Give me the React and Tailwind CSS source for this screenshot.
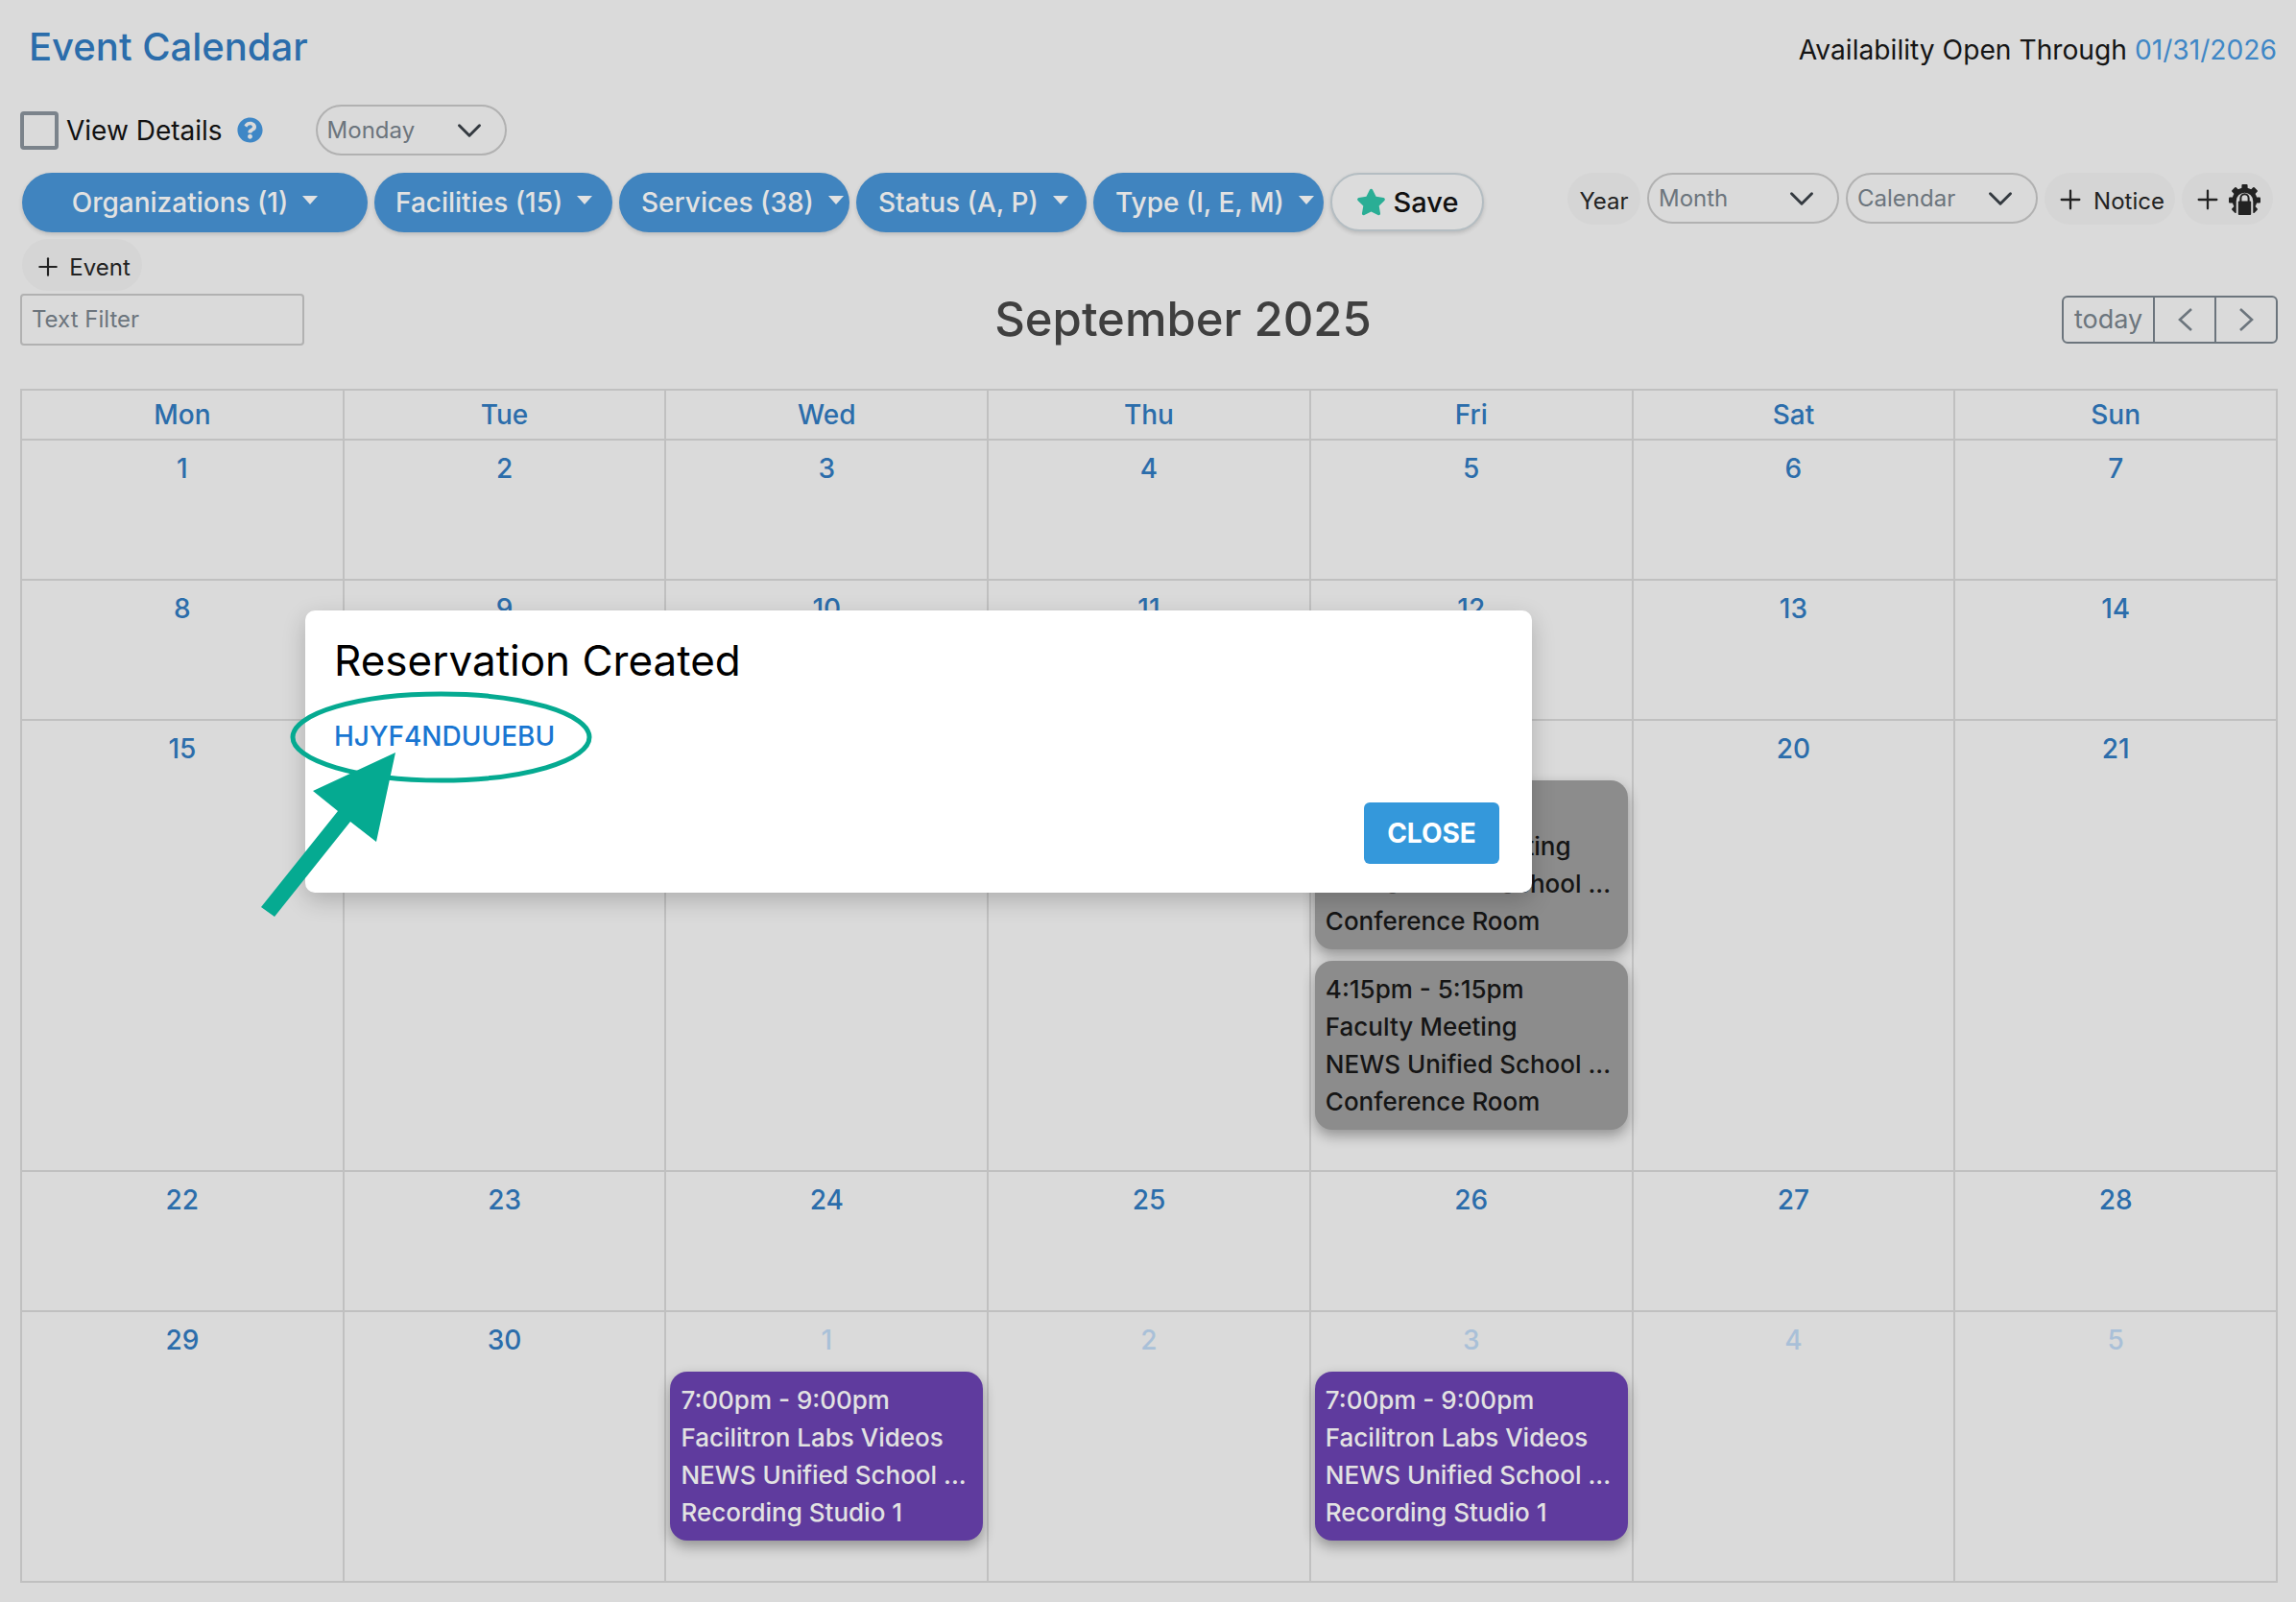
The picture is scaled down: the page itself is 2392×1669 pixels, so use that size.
import React from 'react';
import { Plus } from 'lucide-react';
import { FaStar, FaQuestionCircle } from 'react-icons/fa';

const days = ['Mon', 'Tue', 'Wed', 'Thu', 'Fri', 'Sat', 'Sun'];

const faculty = ['4:15pm - 5:15pm', 'Faculty Meeting', 'NEWS Unified School ...', 'Conference Room'];
const hidden = ['4:15pm - 5:15pm', 'Department Meeting', 'NEWS Unified School ...', 'Conference Room'];
const labs = ['7:00pm - 9:00pm', 'Facilitron Labs Videos', 'NEWS Unified School ...', 'Recording Studio 1'];

const weeks = [
  { height: 'h-[146px]', cells: [1, 2, 3, 4, 5, 6, 7] },
  { height: 'h-[146px]', cells: [8, 9, 10, 11, 12, 13, 14] },
  { height: 'h-[470px]', cells: [15, 16, 17, 18, 19, 20, 21] },
  { height: 'h-[146px]', cells: [22, 23, 24, 25, 26, 27, 28] },
  { height: 'h-[282px]', cells: [29, 30, 1, 2, 3, 4, 5], muted: [2, 3, 4, 5, 6] },
];

const filters = [
  { label: 'Organizations (1)', cls: 'w-[360px] justify-center' },
  { label: 'Facilities (15)', cls: 'w-[248px] pl-[22px]' },
  { label: 'Services (38)', cls: 'w-[240px] pl-[23px]' },
  { label: 'Status (A, P)', cls: 'w-[240px] pl-[23px]' },
  { label: 'Type (I, E, M)', cls: 'w-[240px] pl-[23px]' },
];

const Chevron = () => (
  <svg width="28" height="28" viewBox="0 0 16 16" fill="none" stroke="#343a40" strokeWidth="1.7" strokeLinecap="round" strokeLinejoin="round">
    <path d="m2 5 6 6 6-6" />
  </svg>
);

const Select = ({ label, cls }) => (
  <div className={`flex items-center justify-between rounded-full border-2 border-[#b1b1b1] pl-[10px] pr-[23px] text-[24px] text-[#6c757d] ${cls}`}>
    <span>{label}</span>
    <Chevron />
  </div>
);

const GrayPill = ({ children, cls }) => (
  <div className={`flex items-center rounded-full bg-[#d5d5d5] pt-[6px] text-[24px] text-[#222] ${cls}`}>{children}</div>
);

const GearLock = () => (
  <svg width="33" height="33" viewBox="0 0 32 32" className="-mt-[4px]">
    <g fill="#222">
      <circle cx="16" cy="16" r="12.5" />
      <rect x="13" y="0" width="6" height="6" rx="1" />
      <rect x="13" y="0" width="6" height="6" rx="1" transform="rotate(45 16 16)" />
      <rect x="13" y="0" width="6" height="6" rx="1" transform="rotate(90 16 16)" />
      <rect x="13" y="0" width="6" height="6" rx="1" transform="rotate(135 16 16)" />
      <rect x="13" y="0" width="6" height="6" rx="1" transform="rotate(225 16 16)" />
      <rect x="13" y="0" width="6" height="6" rx="1" transform="rotate(270 16 16)" />
      <rect x="13" y="0" width="6" height="6" rx="1" transform="rotate(315 16 16)" />
    </g>
    <path d="M7.5 30 V17 a8.5 8.5 0 0 1 17 0 V30 Z" fill="#d5d5d5" />
    <rect x="9.5" y="17" width="13" height="14" rx="1" fill="#222" />
    <path d="M12 17.5 V14 a4 4 0 0 1 8 0 V17.5" fill="none" stroke="#222" strokeWidth="2" />
  </svg>
);

const EventCard = ({ lines, cls }) => (
  <div className={`mx-[4px] rounded-[18px] px-[11px] py-[10px] text-[26px] font-medium leading-[39px] shadow-[0_6px_14px_rgba(0,0,0,0.33)] whitespace-nowrap ${cls}`}>
    {lines.map((line) => (
      <div key={line}>{line}</div>
    ))}
  </div>
);

const App = () => {
  return (
    <div className="relative w-[2392px] h-[1669px] overflow-hidden bg-[#dadada] pl-[21px] pr-[19px] font-[Inter,sans-serif]">
      {/* top line */}
      <div className="flex h-[109px] items-start justify-between">
        <h1 className="ml-[9px] mt-[24px] text-[40px] font-medium leading-[50px] text-[#2b6dab]">Event Calendar</h1>
        <div className="mr-[1px] mt-[33px] text-[28.2px] leading-[38px] text-[#151515]">
          Availability Open Through <span className="text-[#3f87c6]">01/31/2026</span>
        </div>
      </div>

      <div className="flex h-[53px] items-center">
        <div className="h-[40px] w-[40px] rounded-[4px] border-[4px] border-[#7b838b]" />
        <span className="ml-[8px] text-[28px] text-[#111]">View Details</span>
        <FaQuestionCircle className="ml-[15px] text-[27px] text-[#3f87c6]" />
        <Select label="Monday" cls="ml-[55px] h-[53px] w-[199px]" />
      </div>

      {/* filters */}
      <div className="mt-[18px] flex h-[69px] items-start justify-between">
        <div className="ml-[2px] flex gap-[7px]">
          {filters.map((f) => (
            <div
              key={f.label}
              className={`flex h-[62px] items-center gap-[15px] rounded-full bg-[#4084bf] text-[28px] font-medium text-[#e2e2e2] shadow-[0_2px_4px_rgba(0,0,0,0.15)] ${f.cls}`}
            >
              <span className="whitespace-nowrap">{f.label}</span>
              <span className="mt-[-6px] h-0 w-0 border-x-[8px] border-t-[9px] border-x-transparent border-t-[#e2e2e2]" />
            </div>
          ))}
          <div className="flex h-[61px] w-[160px] items-center justify-center gap-[8px] rounded-full border-2 border-[#b4bdc2] bg-[#dcdcdc] text-[29px] font-medium text-[#111] shadow-[0_2px_4px_rgba(0,0,0,0.15)]">
            <FaStar className="text-[31px] text-[#2aae95]" />
            Save
          </div>
        </div>
        <div className="mr-[5px] flex gap-[7px]">
          <GrayPill cls="h-[54px] w-[76px] justify-center">Year</GrayPill>
          <Select label="Month" cls="h-[53px] w-[200px]" />
          <Select label="Calendar" cls="h-[53px] w-[200px]" />
          <GrayPill cls="h-[54px] w-[136px] justify-center gap-[8px]">
            <Plus size={32} strokeWidth={1.7} className="-mt-[4px]" />
            Notice
          </GrayPill>
          <GrayPill cls="h-[54px] w-[95px] justify-center gap-[6px]">
            <Plus size={32} strokeWidth={1.7} className="-ml-[2px] -mt-[4px]" />
            <GearLock />
          </GrayPill>
        </div>
      </div>

      <GrayPill cls="ml-[2px] h-[54px] w-[125px] justify-center gap-[7px]">
        <Plus size={30} strokeWidth={1.7} className="-mt-[2px]" />
        Event
      </GrayPill>

      <div className="mt-[3px] flex h-[54px] items-center justify-between">
        <div className="flex h-[54px] w-[296px] items-center rounded-[4px] border-2 border-[#b1b1b1] pl-[10px] text-[24px] text-[#6c757d]">
          Text Filter
        </div>
        <div className="text-[49px] font-medium text-[#3f3f3f]">September 2025</div>
        <div className="flex h-[50px] w-[225px] rounded-[6px] border-2 border-[#6c757d] text-[27px] text-[#6c757d]">
          <div className="flex w-[95px] items-center justify-center border-r-2 border-[#6c757d]">today</div>
          <div className="flex w-[64px] items-center justify-center border-r-2 border-[#6c757d]">
            <svg width="17" height="26" viewBox="0 0 17 26" fill="none" stroke="#6c757d" strokeWidth="2.6">
              <path d="M15 2 3 13l12 11" />
            </svg>
          </div>
          <div className="flex flex-1 items-center justify-center">
            <svg width="17" height="26" viewBox="0 0 17 26" fill="none" stroke="#6c757d" strokeWidth="2.6">
              <path d="m2 2 12 11L2 24" />
            </svg>
          </div>
        </div>
      </div>

      {/* calendar */}
      <div className="mt-[45px] w-[2352px] border-l-2 border-t-2 border-[#c0c0c0]">
        <div className="grid h-[52px] grid-cols-7 border-b-2 border-[#c0c0c0]">
          {days.map((d) => (
            <div key={d} className="flex items-center justify-center border-r-2 border-[#c0c0c0] text-[28px] font-medium text-[#2b6dab]">
              {d}
            </div>
          ))}
        </div>
        {weeks.map((w, i) => (
          <div key={i} className={`grid grid-cols-7 border-b-2 border-[#c0c0c0] ${w.height}`}>
            {w.cells.map((n, j) => {
              const muted = w.muted && w.muted.includes(j);
              return (
                <div key={j} className="border-r-2 border-[#c0c0c0] pt-[10px]">
                  <div className={`text-center text-[28px] font-medium leading-[39px] ${muted ? 'text-[#a9c0d8]' : 'text-[#2b6dab]'}`}>{n}</div>
                  {i === 2 && j === 4 && (
                    <div className="mt-[13px] flex flex-col gap-[12px]">
                      <EventCard lines={hidden} cls="bg-[#8c8c8c] text-[#151515]" />
                      <EventCard lines={faculty} cls="bg-[#8c8c8c] text-[#151515]" />
                    </div>
                  )}
                  {i === 4 && (j === 2 || j === 4) && (
                    <div className="mt-[13px]">
                      <EventCard lines={labs} cls="bg-[#5f3b9e] text-[#e2e2e2]" />
                    </div>
                  )}
                </div>
              );
            })}
          </div>
        ))}
      </div>

      {/* confirmation dialog */}
      <div className="absolute left-[318px] top-[636px] flex h-[294px] w-[1278px] flex-col rounded-[10px] bg-white px-[30px] shadow-[0_8px_24px_rgba(0,0,0,0.2)]">
        <h2 className="mt-[24px] text-[44px] font-normal leading-[56px] text-black">Reservation Created</h2>
        <div className="mt-[32px] text-[28px] font-medium leading-[38px] text-[#1976d2]">HJYF4NDUUEBU</div>
        <div className="mt-auto mb-[30px] mr-[4px] flex h-[64px] w-[141px] items-center justify-center self-end rounded-[6px] bg-[#3498db] text-[28px] font-bold text-white">
          CLOSE
        </div>
      </div>

      {/* teal annotation on top of the screenshot */}
      <svg className="absolute left-[260px] top-[710px]" width="370" height="255" viewBox="260 710 370 255">
        <ellipse cx="459.5" cy="768" rx="154.5" ry="45" fill="none" stroke="#05aa91" strokeWidth="5" />
        <polygon points="412,784 326,824 352,845 272,945 286,955 365,856 392,877" fill="#05aa91" />
      </svg>
    </div>
  );
};

export default App;
